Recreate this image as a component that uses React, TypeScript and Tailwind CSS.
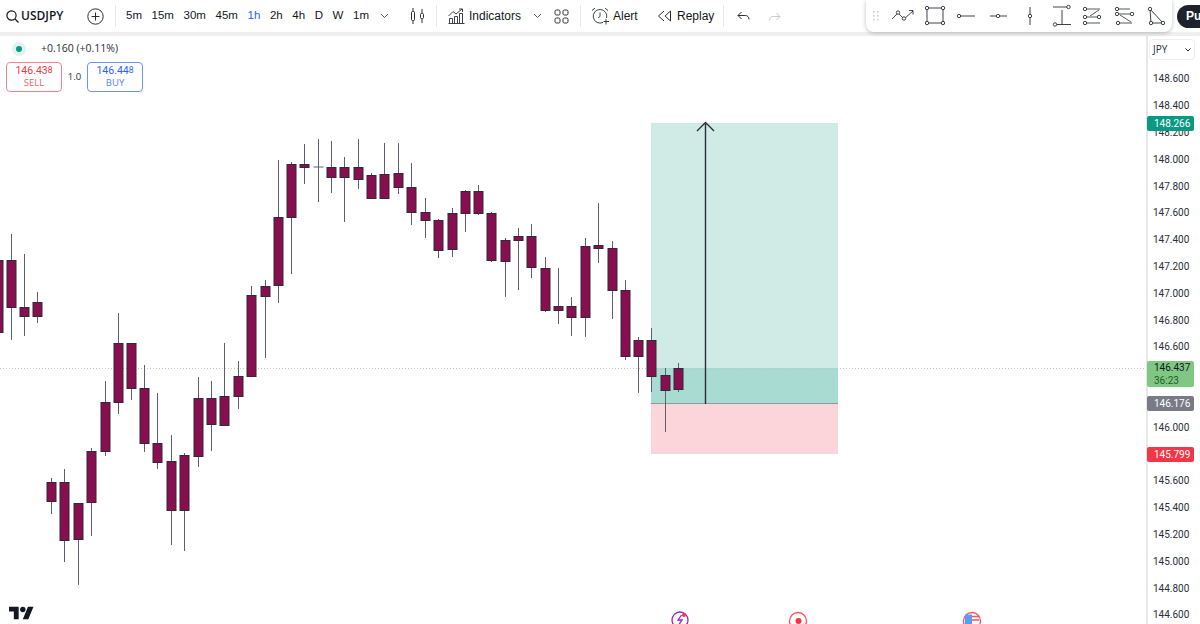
import React from 'react';

// x, wick top, wick bottom, body top, body bottom
const candles: number[][] = [
  [-2, 234, 340, 260, 332], [11, 234, 340, 260, 307], [24.5, 254, 336, 307, 316], [37.5, 292, 323, 302, 316],
  [51, 478, 514, 482, 501], [64.5, 469, 562, 482, 540], [78, 503, 585, 503, 539], [91.5, 448, 536, 451, 502],
  [105, 381, 456, 402, 451], [118, 313, 414, 343, 402], [131, 343, 400, 343, 388], [144.5, 365, 452, 388, 443],
  [157.5, 393, 469, 443, 462], [171, 435, 545, 461, 510], [184.5, 453, 551, 455, 510], [198, 377, 467, 398, 456],
  [211, 381, 451, 398, 424], [224.5, 343, 425, 396, 425], [238, 361, 409, 376, 396], [251.5, 286, 376, 295, 376],
  [265, 280, 358, 286, 296], [278.5, 160, 303, 217, 285], [291.5, 162, 274, 164, 217], [304.5, 144, 184, 164, 167],
  [318, 139, 202, 167, 167], [331.5, 141, 193, 167, 177], [344.5, 157, 222, 167, 177], [358, 139, 189, 167, 179],
  [371.5, 173, 198, 175, 198], [384.5, 143, 198, 174, 198], [398, 143, 194, 173, 187], [411.5, 163, 225, 187, 212],
  [425, 198, 238, 212, 220], [438.5, 219, 258, 220, 250], [452, 208, 257, 213, 249], [465, 190, 232, 191, 213],
  [478, 185, 215, 191, 213], [491.5, 212, 262, 213, 260], [505, 238, 297, 240, 261], [518, 228, 290, 236, 240],
  [531.5, 224, 278, 236, 267], [545, 257, 312, 268, 310], [558.5, 268, 324, 306, 310], [571.5, 297, 336, 306, 317],
  [585, 238, 337, 246, 317], [598, 203, 263, 245, 248], [612, 241, 319, 248, 290], [625, 280, 360, 290, 356],
  [638.5, 337, 393, 340, 356], [651.5, 328, 392, 340, 376], [665, 368, 432, 375, 390], [678.5, 363, 392, 368, 389],
];

// empty slots sit under the price tags
const prices = [
  '148.600', '148.400', '148.200', '148.000', '147.800', '147.600', '147.400', '147.200', '147.000', '146.800', '146.600',
  '', '', '146.000', '', '145.600', '145.400', '145.200', '145.000', '144.800', '144.600',
];

const intervals = ['5m', '15m', '30m', '45m', '1h', '2h', '4h', 'D', 'W', '1m'];

const Chevron: React.FC<{ className?: string }> = ({ className }) => (
  <svg width="9" height="6" viewBox="0 0 9 6" fill="none" stroke="#50535e" strokeWidth="1" className={className}>
    <path d="M1 1l3.5 3.5L8 1" />
  </svg>
);

const Divider: React.FC = () => <div className="w-px h-[22px] bg-[#e8e8ea]" />;

const TopBar: React.FC = () => (
  <div className="flex items-center h-[32px] pl-[6px] text-[12px] text-[#131722] font-['Liberation_Sans',sans-serif] whitespace-nowrap">
    <svg width="13" height="13" viewBox="0 0 13 13" fill="none" stroke="#131722" strokeWidth="1.2">
      <circle cx="5.5" cy="5.5" r="4.6" />
      <path d="M9 9l3.5 3.5" />
    </svg>
    <span className="ml-[2px] w-[66px] text-[12px] font-semibold font-['Open_Sans',sans-serif]">USDJPY</span>
    <svg width="17" height="17" viewBox="0 0 17 17" fill="none" stroke="#2a2e39" strokeWidth="1">
      <circle cx="8.5" cy="8.5" r="7.7" />
      <path d="M8.5 4.5v8M4.5 8.5h8" />
    </svg>
    <div className="ml-[11px]"><Divider /></div>
    <div className="flex items-center gap-[9.6px] ml-[10px] w-[284px] text-[11.5px]">
      {intervals.map((label) => (
        <span key={label} className={label === '1h' ? 'text-[#2962ff]' : ''}>{label}</span>
      ))}
      <Chevron className="ml-[1px]" />
    </div>
    <svg width="15" height="18" viewBox="0 0 15 18" fill="none" stroke="#2a2e39">
      <rect x="1.5" y="4.5" width="3" height="9" rx="1" />
      <rect x="10.5" y="6.5" width="3" height="5" rx="1" />
      <path d="M3 1v3.5M3 13.5V17M12 2v4.5M12 11.5V16" />
    </svg>
    <div className="ml-[11px]"><Divider /></div>
    <svg width="17" height="16" viewBox="0 0 17 16" fill="none" stroke="#2a2e39" strokeWidth="0.9" className="ml-[11px]">
      <path d="M.5 15.5h16M1.5 15.5v-5h3v5M6.5 15.5v-7h3v7M11.5 15.5v-10h3v10" />
      <path d="M.5 8L5 3.5l3 2.5 6-5M11 1h3.5v3" />
    </svg>
    <span className="ml-[4px] w-[52px]">Indicators</span>
    <Chevron className="ml-[12px]" />
    <svg width="15" height="15" viewBox="0 0 15 15" fill="none" stroke="#2a2e39" className="ml-[12px]">
      <rect x="1" y="1" width="5" height="5" rx="1.5" />
      <rect x="9" y="1" width="5" height="5" rx="1.5" />
      <rect x="1" y="9" width="5" height="5" rx="1.5" />
      <rect x="9" y="9" width="5" height="5" rx="1.5" />
    </svg>
    <div className="ml-[11px]"><Divider /></div>
    <svg width="19" height="18" viewBox="0 0 19 18" fill="none" stroke="#2a2e39" strokeWidth="0.9" className="ml-[10px]">
      <path d="M12 15.4A6.8 6.8 0 1 1 15.6 11" />
      <path d="M9 5.5V9.5L7 11M1 3.5L4 1M14 1l3 2.5M15 12v5.500M12.500 14.500h5.500" />
    </svg>
    <span className="ml-[3px] w-[26px]">Alert</span>
    <svg width="15" height="12" viewBox="0 0 15 12" fill="none" stroke="#2a2e39" className="ml-[18px]">
      <path d="M7 1L1.500 6 7 11M13.500 1L8 6l5.500 5V1z" />
    </svg>
    <span className="ml-[5px] w-[36px]">Replay</span>
    <div className="ml-[10px]"><Divider /></div>
    <svg width="13" height="10" viewBox="0 0 13 10" fill="none" stroke="#2a2e39" className="ml-[13px]">
      <path d="M4.500 1L1 4.500 4.500 8M1 4.500h7.500c2 0 3.500 1.500 3.500 4" />
    </svg>
    <svg width="12" height="9" viewBox="0 0 12 9" fill="none" stroke="#c9cbd1" className="ml-[19px]">
      <path d="M7.500 1L11 4.500 7.500 8M11 4.500H4c-2 0-3.500 1.500-3.500 4" />
    </svg>
    <div className="ml-auto flex items-center">
      <DrawingTools />
      <div className="ml-[5px] flex items-center w-[23px] h-[23px] pl-[9px] rounded-l-full bg-[#1e222d] text-white text-[12px] font-semibold overflow-hidden">Pu</div>
    </div>
  </div>
);

const Dot: React.FC<{ x: number; y: number; r?: number }> = ({ x, y, r = 1.7 }) => (
  <circle cx={x} cy={y} r={r} fill="white" stroke="#2a2e39" strokeWidth="0.9" />
);

// floating favourites toolbar, drawn in page coordinates
const DrawingTools: React.FC = () => (
  <div className="relative z-10 w-[306px] h-[32px] rounded-b-[8px] bg-white shadow-[0_1px_4px_rgba(0,0,0,0.25)]">
    <svg width="306" height="32" viewBox="866 0 306 32" fill="none" stroke="#2a2e39" strokeWidth="0.9">
      <g fill="#c9cbd1" stroke="none">
        {[873, 877].map((x) =>
          [11, 15, 19].map((y) => <rect key={`${x}-${y}`} x={x} y={y} width="1.500" height="1.500" />),
        )}
      </g>
      <path d="M892 19l6-6 6 6 9-8M909 10.500h4v4" />
      <Dot x={898} y={12.500} /><Dot x={904} y={18.500} />
      <rect x="927" y="8" width="16" height="15" />
      <Dot x={927} y={8} /><Dot x={943} y={8} /><Dot x={927} y={23} /><Dot x={943} y={23} />
      <path d="M959 16h16" /><Dot x={959} y={16} />
      <path d="M990 16h17" /><Dot x={998} y={16} />
      <path d="M1030 7v18" /><Dot x={1030} y={16} />
      <path d="M1053 7h17M1055 24.500h16M1062 10v14" />
      <Dot x={1068.500} y={7} /><Dot x={1055} y={24.500} />
      <path d="M1085 9h15M1085 17h15M1085 23h15M1090 16l9-6" strokeWidth="0.8" />
      <Dot x={1085} y={9} /><Dot x={1085} y={17} /><Dot x={1099} y={17} /><Dot x={1085} y={23} />
      <path d="M1116 9h14M1116 14h15M1118 23h14M1120 15l11 7" strokeWidth="0.8" />
      <Dot x={1117} y={9} /><Dot x={1117} y={14} /><Dot x={1132} y={14} /><Dot x={1118} y={23} />
      <path d="M1150 9l13 14h-12z" />
      <Dot x={1150} y={9} /><Dot x={1151} y={23} /><Dot x={1163} y={23} />
    </svg>
  </div>
);

const ChartSvg: React.FC = () => (
  <svg width="1146" height="588" viewBox="0 36 1146 588" className="absolute left-0 top-0">
    <rect x="651" y="123" width="187" height="281" fill="#d0ebe6" />
    <rect x="651" y="368" width="187" height="36" fill="#a8dbd2" />
    <rect x="651" y="404" width="187" height="50" fill="#fbd5d9" />
    <path d="M651 403.500h187" stroke="#8f9a9c" strokeWidth="1" />
    <path d="M0 368.500h1146" stroke="#a5d6a7" strokeWidth="1" strokeDasharray="1 2" />
    {candles.map(([x, wickTop, wickBottom, top, bottom]) => {
      const cx = Math.floor(x) + 0.5;
      return (
        <g key={x}>
          <path d={`M${cx} ${wickTop}V${wickBottom}`} stroke="#5d606b" strokeWidth="1" />
          {bottom - top > 0
            ? <rect x={cx - 4.5} y={top + 0.5} width="9" height={bottom - top} fill="#880e4f" stroke="#2e2a38" strokeWidth="1" />
            : <path d={`M${cx - 5} ${top}h10`} stroke="#5d606b" strokeWidth="1" />}
        </g>
      );
    })}
    <path d="M705.500 404V124M697 131l8.500-8.500 8.500 8.500" fill="none" stroke="#2a2e39" strokeWidth="1.400" />
    <path transform="translate(9 604) scale(0.69)" fill="#131722" d="M14 22H7V11H0V4h14v18zM28 22h-8l7.500-18h8L28 22z" />
    <circle cx="22.800" cy="609.500" r="2.700" fill="#131722" />
    <g fill="none" strokeWidth="1.300">
      <circle cx="680" cy="620" r="8" stroke="#9c27b0" />
      <path d="M681.500 615l-3.500 5h4l-3 4.500" stroke="#9c27b0" />
      <circle cx="798" cy="621" r="8.500" stroke="#f7525f" />
      <circle cx="972" cy="621" r="8.500" stroke="#f7525f" />
    </g>
    <circle cx="684" cy="615" r="2" fill="#f23645" />
    <circle cx="798.500" cy="621" r="3" fill="#f23645" />
    <rect x="965" y="614.500" width="7" height="9.500" fill="#5b9cf6" />
    <path d="M972 616.500h7M972 620h7" stroke="#f7525f" strokeWidth="1.500" />
  </svg>
);

const Quote: React.FC<{ price: string; small: string; label: string; tone: string; border: string }> = ({ price, small, label, tone, border }) => (
  <div className={`flex flex-col items-center justify-center w-[56px] h-[30px] rounded-[4px] border bg-white leading-[12px] ${border} ${tone}`}>
    <span className="text-[10.5px] font-['Roboto',sans-serif]">{price}<span className="text-[8.5px] relative top-[-1.5px]">{small}</span></span>
    <span className="text-[9.500px] opacity-80">{label}</span>
  </div>
);

const Legend: React.FC = () => (
  <div className="absolute left-[6px] top-[5px] flex flex-col gap-[5px] font-['Open_Sans',sans-serif] text-[#2a2e39]">
    <div className="flex items-center h-[16px]">
      <span className="ml-[6px] flex items-center justify-center w-[14px] h-[14px] rounded-full bg-[#e0f2ef]">
        <span className="w-[6px] h-[6px] rounded-full bg-[#089981]" />
      </span>
      <span className="ml-[15px] text-[10.500px]">+0.160 (+0.11%)</span>
    </div>
    <div className="flex items-center">
      <Quote price="146.43" small="8" label="SELL" tone="text-[#f23645]" border="border-[#f7828c]" />
      <span className="w-[25px] text-center text-[9.500px]">1.0</span>
      <Quote price="146.44" small="8" label="BUY" tone="text-[#2962ff]" border="border-[#6f93f5]" />
    </div>
  </div>
);

const Tag: React.FC<{ top: string; color: string; children: React.ReactNode }> = ({ top, color, children }) => (
  <div className={`absolute left-[-1px] w-[47px] pl-[7px] rounded-[2px] leading-[13px] ${top} ${color}`}>{children}</div>
);

const PriceAxis: React.FC = () => (
  <div className="relative flex-1 border-l-2 border-[#e8e8ea] font-['Roboto',sans-serif] text-[10px] text-[#2a2e39]">
    <div className="flex items-center justify-between w-[46px] h-[21px] mt-[3px] ml-[1px] px-[3px] rounded-[4px] border border-[#eeeeef] text-[10px] font-['Open_Sans',sans-serif]">
      JPY
      <svg width="6" height="4" viewBox="0 0 6 4" fill="none" stroke="#2a2e39"><path d="M.5.5L3 3 5.500.5" /></svg>
    </div>
    <div className="mt-[5.6px] flex flex-col">
      {prices.map((p, i) => (
        <div key={i} className="h-[26.8px] flex items-center pl-[5px]">{p}</div>
      ))}
    </div>
    <Tag top="top-[80px]" color="bg-[#089981] text-white py-[1px]">148.266</Tag>
    <Tag top="top-[325px]" color="bg-[#81c784] text-[#131722]">
      146.437
      <div className="text-[#1b5e20]">36:23</div>
    </Tag>
    <Tag top="top-[360px]" color="bg-[#787b86] text-white py-[1px]">146.176</Tag>
    <Tag top="top-[411px]" color="bg-[#f23645] text-white py-[1px]">145.799</Tag>
  </div>
);

const App: React.FC = () => (
  <div className="flex flex-col w-[1200px] h-[624px] overflow-hidden bg-white">
    <TopBar />
    <div className="h-[4px] bg-[#efeff0]" />
    <div className="flex flex-1 min-h-0">
      <div className="relative w-[1146px] overflow-hidden">
        <ChartSvg />
        <Legend />
      </div>
      <PriceAxis />
    </div>
  </div>
);

export default App;
